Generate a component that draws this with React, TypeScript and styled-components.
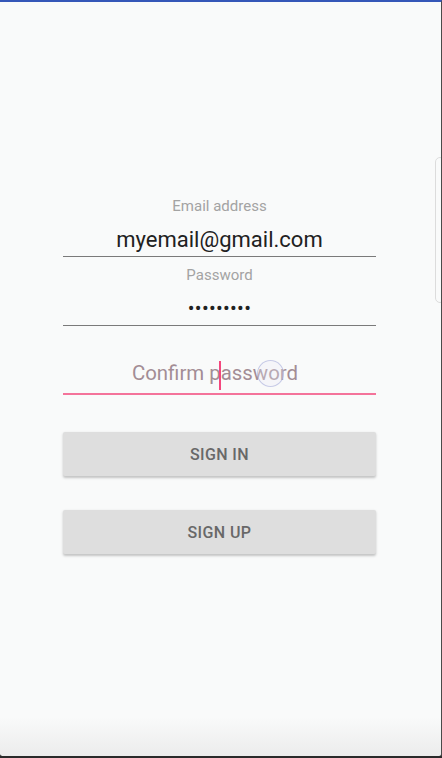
import React from "react";
import styled, { createGlobalStyle } from "styled-components";

const Global = createGlobalStyle`
  html, body { margin: 0; padding: 0; background: #2b2b2b; }
  body { font-family: Roboto, "Noto Sans", Arial, sans-serif; }
  * { box-sizing: border-box; }
`;

const Screen = styled.div`
  position: relative;
  width: 442px;
  height: 758px;
  overflow: hidden;
  border-top: 2px solid #3557b8;
  border-right: 1px solid #4a4a4a;
  border-bottom: 2px solid #2a2a2a;
  border-bottom-left-radius: 4px;
  border-bottom-right-radius: 4px;
  background: linear-gradient(
    to bottom,
    #f9fafa 0px,
    #f9fafa 715px,
    #ebebeb 756px
  );
  padding-top: 186px;
`;

const Form = styled.div`
  margin-left: 63px;
  width: 313px;
  display: flex;
  flex-direction: column;
`;

const Field = styled.div`
  position: relative;
  display: flex;
  flex-direction: column;
  align-items: center;
  padding-top: 10px;
`;

const Label = styled.div`
  height: 16px;
  line-height: 16px;
  font-size: 15px;
  color: #a3a3a3;
`;

const Value = styled.div<{ $hint?: boolean; $dots?: boolean }>`
  margin-top: ${(p) => (p.$hint ? "9px" : p.$dots ? "13px" : "14px")};
  margin-right: ${(p) => (p.$hint ? "9px" : "0")};
  height: 24px;
  line-height: 24px;
  font-size: ${(p) => (p.$hint ? "20.4px" : p.$dots ? "20px" : "22px")};
  color: ${(p) => (p.$hint ? "#a38d95" : "#212121")};
  letter-spacing: ${(p) => (p.$dots ? "0.3px" : "0")};
`;

const Underline = styled.div<{ $active?: boolean; $gap: number }>`
  align-self: stretch;
  margin-top: ${(p) => p.$gap}px;
  height: ${(p) => (p.$active ? "2px" : "1px")};
  background: ${(p) => (p.$active ? "#f4739a" : "#7a7a7a")};
`;

const Caret = styled.div`
  position: absolute;
  left: 156px;
  top: 35px;
  width: 2px;
  height: 29px;
  background: #f4477e;
`;

const Ripple = styled.div`
  position: absolute;
  left: 194px;
  top: 34px;
  width: 27px;
  height: 27px;
  border-radius: 50%;
  border: 1.5px solid rgba(160, 165, 215, 0.55);
  background: rgba(235, 236, 248, 0.3);
`;

const Button = styled.button<{ $first?: boolean }>`
  margin-top: ${(p) => (p.$first ? "37px" : "34px")};
  height: 44px;
  width: 100%;
  border: none;
  border-radius: 2px;
  background: #dedede;
  box-shadow: 0 1.5px 2.5px rgba(0, 0, 0, 0.22);
  font-family: Roboto, "Noto Sans", Arial, sans-serif;
  font-weight: 500;
  font-size: 16px;
  letter-spacing: 0.4px;
  color: #686868;
  padding: 0;
`;

const ScrollHint = styled.div`
  position: absolute;
  right: -4px;
  top: 155px;
  width: 10px;
  height: 146px;
  border: 1px solid #dcdcdc;
  border-radius: 5px;
`;

export default function App() {
  return (
    <>
      <Global />
      <Screen>
        <ScrollHint />
        <Form>
          <Field>
            <Label>Email address</Label>
            <Value>myemail@gmail.com</Value>
            <Underline $gap={4} />
          </Field>
          <Field>
            <Label>Password</Label>
            <Value $dots>•••••••••</Value>
            <Underline $gap={5} />
          </Field>
          <Field>
            <Label />
            <Value $hint>Confirm password</Value>
            <Underline $active $gap={8} />
            <Caret />
            <Ripple />
          </Field>
          <Button $first>SIGN IN</Button>
          <Button>SIGN UP</Button>
        </Form>
      </Screen>
    </>
  );
}
